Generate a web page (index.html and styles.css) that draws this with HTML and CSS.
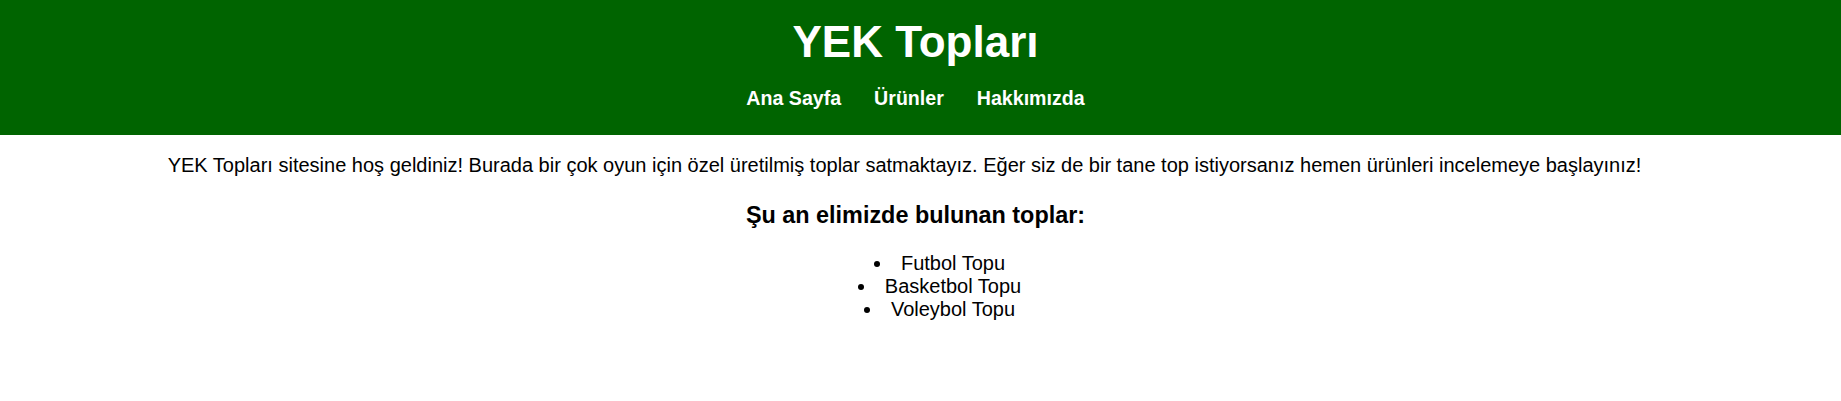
FILE: index.html
```html
<!DOCTYPE html>
<html lang="tr">
<head>
<meta charset="utf-8">
<title>YEK Topları</title>
<link rel="stylesheet" href="styles.css">
</head>
<body>
<header class="site-header">
  <h1 class="site-title">YEK Topları</h1>
  <nav class="site-nav">
    <a href="#" class="nav-link">Ana Sayfa</a>
    <a href="#" class="nav-link">Ürünler</a>
    <a href="#" class="nav-link">Hakkımızda</a>
  </nav>
</header>
<main class="content">
  <p class="intro">YEK Topları sitesine hoş geldiniz! Burada bir çok oyun için özel üretilmiş toplar satmaktayız. Eğer siz de bir tane top istiyorsanız hemen ürünleri incelemeye başlayınız!</p>
  <h3 class="section-title">Şu an elimizde bulunan toplar:</h3>
  <ul class="ball-list">
    <li>Futbol Topu</li>
    <li>Basketbol Topu</li>
    <li>Voleybol Topu</li>
  </ul>
</main>
</body>
</html>
```

FILE: styles.css
```css
html, body {
  margin: 0;
  padding: 0;
  background: #ffffff;
}

body {
  font-family: "Liberation Sans", Arial, sans-serif;
  font-size: 20px;
  color: #000000;
  text-align: center;
}

.site-header {
  background: #006400;
  color: #ffffff;
  padding: 17px 10px 0 0;
  height: 135px;
  box-sizing: border-box;
}

.site-title {
  margin: 0 0 20px;
  font-size: 44px;
  font-weight: bold;
  line-height: normal;
}

.site-nav {
  display: flex;
  justify-content: center;
  gap: 33px;
}

.nav-link {
  color: #ffffff;
  text-decoration: none;
  font-weight: bold;
  font-size: 19.6px;
}

.content {
  padding: 19px 10px 0 0;
}

.intro {
  margin: 0;
  padding-right: 22px;
}

.section-title {
  margin: 24.5px 0 0;
  font-size: 23.4px;
  font-weight: bold;
}

.ball-list {
  margin: 23px 0 0;
  padding: 0 0 0 48px;
  list-style: disc inside;
  line-height: 23.35px;
}
```
